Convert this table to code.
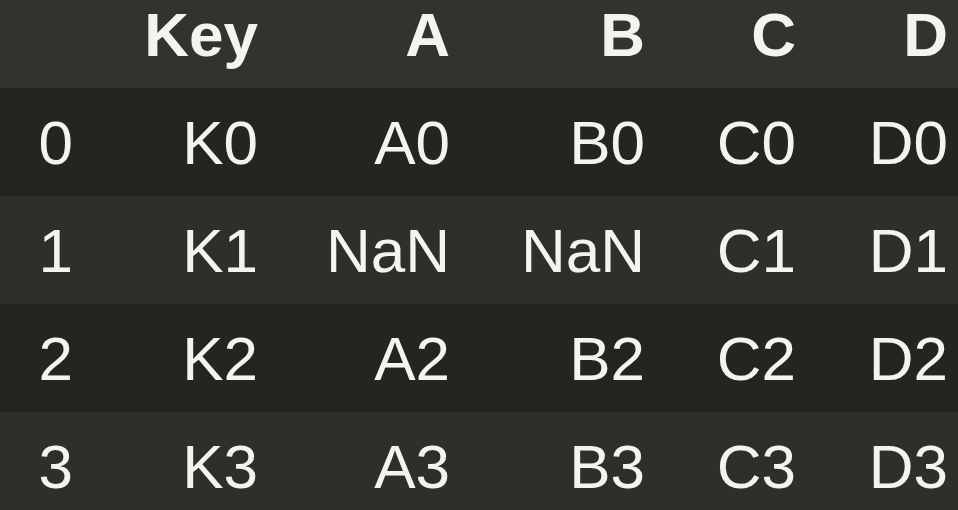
import React from "react";

const cols = "grid grid-cols-[83px_185px_192px_195px_151px_152px]";
const header = ["", "Key", "A", "B", "C", "D"];
const rows = [
  ["0", "K0", "A0", "B0", "C0", "D0"],
  ["1", "K1", "NaN", "NaN", "C1", "D1"],
  ["2", "K2", "A2", "B2", "C2", "D2"],
  ["3", "K3", "A3", "B3", "C3", "D3"],
];

export default function App() {
  return (
    <div
      className="w-[958px] h-[510px] overflow-hidden bg-[#2e2e2a] text-[#f4f4ef] text-[62px] leading-[70px]"
      style={{ fontFamily: '"Liberation Sans", Arial, sans-serif' }}
    >
      <div className={`${cols} h-[88px] bg-[#32322e] font-bold`}>
        {header.map((h, i) => (
          <div key={i} className="text-right pr-[10px]">
            {h}
          </div>
        ))}
      </div>
      {rows.map((r, ri) => (
        <div
          key={ri}
          className={`${cols} h-[108px] pt-[20px] ${
            ri % 2 === 0 ? "bg-[#242421]" : "bg-[#2e2e2a]"
          }`}
        >
          {r.map((c, ci) => (
            <div key={ci} className="text-right pr-[10px]">
              {c}
            </div>
          ))}
        </div>
      ))}
    </div>
  );
}
